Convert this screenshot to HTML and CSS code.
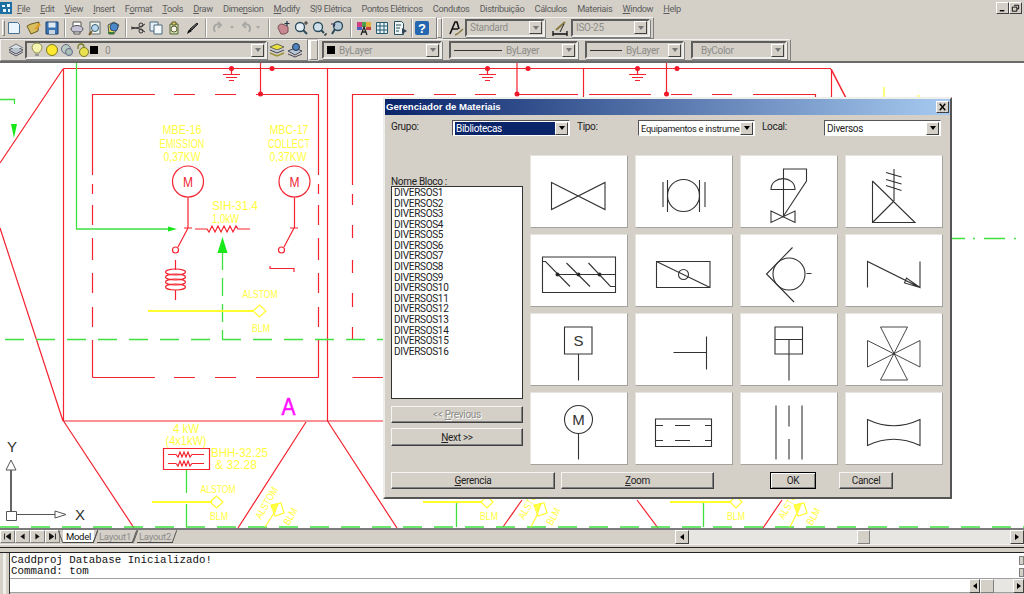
FILE: index.html
```html
<!DOCTYPE html>
<html lang="pt">
<head>
<meta charset="utf-8">
<title>Gerenciador de Materiais</title>
<link rel="stylesheet" href="styles.css">
</head>
<body>
<div class="app">
  <nav class="menubar">
    <svg class="app-icon" viewBox="0 0 12 12"><rect width="12" height="12" fill="#1c6ea4"/><path d="M2 3h3v2H2zM7 2h3v3H7zM3 7h3v3H3zM8 7h2v3H8z" fill="#e8f4ff"/></svg>
    <span class="menu"><u>F</u>ile</span><span class="menu"><u>E</u>dit</span><span class="menu"><u>V</u>iew</span><span class="menu"><u>I</u>nsert</span><span class="menu">F<u>o</u>rmat</span><span class="menu"><u>T</u>ools</span><span class="menu"><u>D</u>raw</span><span class="menu">Dime<u>n</u>sion</span><span class="menu"><u>M</u>odify</span><span class="menu">S|9 Elétrica</span><span class="menu">Pontos Elétricos</span><span class="menu">Condutos</span><span class="menu">Distribuição</span><span class="menu">Cálculos</span><span class="menu">Materiais</span><span class="menu"><u>W</u>indow</span><span class="menu"><u>H</u>elp</span>
    <span class="win-btns">
      <span class="win-btn"><svg viewBox="0 0 12 11"><path d="M3 8.500h5" stroke="#000" stroke-width="1.500"/></svg></span>
      <span class="win-btn"><svg viewBox="0 0 12 11"><path d="M4.500 2.500h5v4h-2M2.500 4.500h5v4.500h-5z" fill="none" stroke="#000"/></svg></span>
    </span>
  </nav>

  <div class="tb-row">
    <div class="band band-std">
      <span class="grip-one"></span>
      <span class="tb"><svg viewBox="0 0 16 16"><path d="M2.500 2.500h9l2 2v9h-11z" fill="#eaf4fb" stroke="#4a6f94"/></svg></span>
      <span class="tb tb-open"><svg viewBox="0 0 16 16"><path d="M1 6l4-2 8-2-1 9-7 3z" fill="#d8c060" stroke="#6d5a20"/><path d="M8 9l5-6 2 2-5 5z" fill="#e0a030"/></svg></span>
      <span class="tb"><svg viewBox="0 0 16 16"><path d="M2 2h12v12H2z" fill="#3b74b4" stroke="#1d3f6d"/><path d="M4.500 2.500h7v5h-7z" fill="#dfeaf4"/><path d="M5 10h6v4H5z" fill="#c8d4e0"/></svg></span>
      <span class="sep"></span>
      <span class="tb"><svg viewBox="0 0 16 16"><path d="M4 6V2h8v4" fill="#fff" stroke="#555"/><ellipse cx="8" cy="9" rx="6" ry="3.500" fill="#c6c2d8" stroke="#555"/><path d="M5 12h6v2H5z" fill="#fff" stroke="#555"/></svg></span>
      <span class="tb"><svg viewBox="0 0 16 16"><path d="M3 2h10v12H3z" fill="#f4f4ea" stroke="#5a6a70"/><circle cx="8" cy="8" r="3.500" fill="#b8d8f0" stroke="#3a6070"/><path d="M5 11l-3 4" stroke="#7a5a20" stroke-width="2"/></svg></span>
      <span class="tb"><svg viewBox="0 0 16 16"><path d="M3 5l6-3 5 3-5 9H4z" fill="#e6d858" stroke="#555"/><circle cx="9" cy="7" r="4" fill="#4d88c8" stroke="#28507a"/><path d="M3 13h6" stroke="#3a7a3a" stroke-width="2"/></svg></span>
      <span class="sep"></span>
      <span class="tb"><svg viewBox="0 0 16 16"><path d="M1 7l9 2 5 3M1 9l9-2 5-3" fill="none" stroke="#333"/><circle cx="11" cy="5" r="2" fill="none" stroke="#333"/><circle cx="11" cy="11" r="2" fill="none" stroke="#333"/></svg></span>
      <span class="tb"><svg viewBox="0 0 16 16"><path d="M2 2h8v9H2z" fill="#e8f0f6" stroke="#4a6880"/><path d="M6 5h8v9H6z" fill="#f6fafc" stroke="#4a6880"/></svg></span>
      <span class="tb"><svg viewBox="0 0 16 16"><path d="M4 4h8v10H4z" fill="#cfe0b8" stroke="#56602e"/><path d="M6 2h4v3H6z" fill="#e0c060" stroke="#56602e"/><circle cx="8" cy="9" r="3" fill="#f4f4e8" stroke="#56602e"/></svg></span>
      <span class="tb"><svg viewBox="0 0 16 16"><path d="M13 3l1 1-6 6-2-1z" fill="#555" stroke="#222"/><path d="M6 9l2 2-5 3 1-3z" fill="#111"/></svg></span>
      <span class="sep sep-wide"></span>
      <span class="tb"><svg viewBox="0 0 16 16"><path d="M4 12c-3-6 1-9 6-7M7 2l3 3-3 3" fill="none" stroke="#a8a8a4" stroke-width="2"/></svg></span>
      <span class="tb-drop"><i></i></span>
      <span class="tb"><svg viewBox="0 0 16 16"><path d="M12 12c3-6-1-9-6-7M9 2L6 5l3 3" fill="none" stroke="#a8a8a4" stroke-width="2"/></svg></span>
      <span class="tb-drop"><i></i></span>
      <span class="sep sep-wider"></span>
      <span class="tb"><svg viewBox="0 0 16 16"><path d="M3 8c0-3 2-4 4-4l3 1 3 2v5l-3 2H6z" fill="#c88a90" stroke="#7a5058"/><path d="M12 1v5M9.500 3.500h5" stroke="#234" stroke-width="1.200"/></svg></span>
      <span class="tb"><svg viewBox="0 0 16 16"><circle cx="7" cy="7" r="4.500" fill="#e4eef4" stroke="#2a4a5a" stroke-width="1.300"/><path d="M10 10l4 4" stroke="#2a4a5a" stroke-width="2"/><path d="M13 1v4M11 3h4" stroke="#333"/></svg></span>
      <span class="tb"><svg viewBox="0 0 16 16"><circle cx="7" cy="7" r="4.500" fill="#cfe0ec" stroke="#2a4a5a" stroke-width="1.300"/><path d="M10 10l3 3" stroke="#2a4a5a" stroke-width="2"/><path d="M15 13v2h-2" stroke="#111" fill="none"/></svg></span>
      <span class="tb"><svg viewBox="0 0 16 16"><circle cx="9" cy="6" r="4.500" fill="#b4c8d8" stroke="#2a4a5a" stroke-width="1.300"/><path d="M6 9l-3 5" stroke="#2a4a5a" stroke-width="2"/><path d="M2 4h4l-1 3" fill="none" stroke="#335"/></svg></span>
      <span class="sep sep-wide"></span>
      <span class="tb"><svg viewBox="0 0 16 16"><path d="M1 2h5v5H1z" fill="#d04080"/><path d="M6 2h4v5H6z" fill="#50a050"/><path d="M10 2h5v5h-5z" fill="#e0b040"/><path d="M1 7h5v3H1z" fill="#5060c0"/><path d="M10 7h5v3h-5z" fill="#c04040"/><path d="M5 15l3-8 3 8M6 12h4" fill="none" stroke="#222" stroke-width="1.300"/></svg></span>
      <span class="tb"><svg viewBox="0 0 16 16"><path d="M2.500 2.500h11v11h-11z" fill="#e8f4fa" stroke="#26586e"/><path d="M2.500 6h11M2.500 10h11M6 2.500v11M10 2.500v11" stroke="#26586e"/></svg></span>
      <span class="tb"><svg viewBox="0 0 16 16"><path d="M2.500 1.500h7l2 2v11h-9z" fill="#f0f4f4" stroke="#27505e"/><path d="M4 5h5M4 8h4M4 11h3" stroke="#27505e"/><path d="M10 8l5 3-5 3z" fill="#345"/></svg></span>
      <span class="sep sep-narrow"></span>
      <span class="tb"><svg viewBox="0 0 16 16"><rect x="1" y="1" width="14" height="14" rx="2" fill="#2566b0"/><text class="help-mark" x="8" y="12.500">?</text></svg></span>
    </div>
    <span class="grip"></span>
    <div class="band band-style">
      <span class="tb tb-a"><svg viewBox="0 0 16 16"><path d="M2 14L7 2h2l2 7M4 9h6" fill="none" stroke="#111" stroke-width="1.600"/><path d="M7 15c3-1 5-3 8-6" stroke="#8a7a40" stroke-width="1.500" fill="none"/></svg></span>
      <span class="combo combo-standard"><span class="combo-text">Standard</span><span class="arrow"><i></i></span></span>
      <span class="tb tb-dim"><svg viewBox="0 0 16 16"><path d="M1 14h14M1 11v5M15 11v5" stroke="#111" fill="none" stroke-width="1.300"/><path d="M4 10l9-8" stroke="#8a7a40" stroke-width="2"/><path d="M8 12l4-8" stroke="#222"/></svg></span>
      <span class="combo combo-iso"><span class="combo-text">ISO-25</span><span class="arrow"><i></i></span></span>
    </div>
  </div>

  <div class="tb-row tb-row-last">
    <div class="band band-layers">
      <span class="tb tb-first"><svg viewBox="0 0 16 16"><path d="M8 4l7 4-7 4-7-4z" fill="#b8c4cc" stroke="#556"/><path d="M1 10l7 4 7-4" fill="none" stroke="#556"/><path d="M1 6l7-4 7 4" fill="#d8e0e4" stroke="#778"/></svg></span>
      <span class="combo combo-layer">
        <span class="layer-icons">
          <svg viewBox="0 0 14 16"><path d="M7 1c3 0 5 2 5 4.500S10 9 9 11H5C4 9 2 8 2 5.500S4 1 7 1z" fill="#f4f4b0" stroke="#8a8a50"/><path d="M5 12h4v2H5z" fill="#999"/></svg>
          <svg viewBox="0 0 14 16"><circle cx="7" cy="8" r="5.500" fill="#ffe830" stroke="#7a7a20"/></svg>
          <svg viewBox="0 0 14 16"><circle cx="6" cy="7" r="4.500" fill="#b8ccc4" stroke="#668"/><circle cx="9" cy="10" r="3.500" fill="#a8c0b8" stroke="#668"/></svg>
          <svg viewBox="0 0 14 16"><path d="M3 7V5c0-4 6-4 6 0" fill="none" stroke="#7a7a20" stroke-width="1.300"/><circle cx="9" cy="10" r="4.500" fill="#e8e050" stroke="#7a7a20"/></svg>
          <span class="swatch"></span>
        </span>
        <span class="combo-text">0</span>
        <span class="arrow"><i></i></span>
      </span>
      <span class="tb tb-layer2"><svg viewBox="0 0 16 16"><path d="M1 5l7-3 7 3-7 3z" fill="#e6e040" stroke="#665"/><path d="M1 8l7 3 7-3" fill="#c0c8d0" stroke="#445"/><path d="M1 11l7 3 7-3" fill="none" stroke="#9a9030" stroke-width="1.500"/></svg></span>
      <span class="tb"><svg viewBox="0 0 16 16"><path d="M1 9l7-3 7 3-7 4z" fill="#b8c8d8" stroke="#445"/><circle cx="9" cy="5" r="3.500" fill="#5080c0" stroke="#234"/><path d="M1 12l7 3 7-3" fill="none" stroke="#445"/></svg></span>
    </div>
    <span class="grip grip-props"></span>
    <div class="band band-props">
      <span class="combo combo-color"><span class="swatch"></span><span class="combo-text">ByLayer</span><span class="arrow"><i></i></span></span>
      <span class="combo combo-ltype"><span class="line-sample"></span><span class="combo-text">ByLayer</span><span class="arrow"><i></i></span></span>
      <span class="combo combo-lweight"><span class="line-sample"></span><span class="combo-text">ByLayer</span><span class="arrow"><i></i></span></span>
      <span class="combo combo-plot"><span class="combo-text combo-indent">ByColor</span><span class="arrow"><i></i></span></span>
    </div>
  </div>

  <main class="canvas">
    <svg class="drawing" viewBox="0 63 1024 465">
      <g class="red">
        <path d="M63.500 68.500H831M63.500 68.500V421M63.500 421H384M0 163L63 69M0 228L63 421M327.500 69V421"/>
        <path d="M63.500 421L134 528M306 422L238 528M327.500 421L397 528"/>
        <path d="M522 500L503 527M637 500L658 528M782 500L763 528"/>
        <path d="M92.500 94.500H155M174 94.500H195M215 94.500H236M256 94.500H318.500M92.500 94V175M92.500 184V194M92.500 205V225M92.500 238V260M92.500 273V293M92.500 307V327M92.500 340V377.500M92.500 377.500H155M174 377.500H195M215 377.500H236M256 377.500H318.500"/>
        <path d="M318.500 94V175M318.500 184V194M318.500 205V225M318.500 238V260M318.500 273V293M318.500 307V327M318.500 340V377.500"/>
        <path d="M352.500 94.500H384M352.500 94V185M352.500 194V205M352.500 225V238M352.500 260V273M352.500 293V307M352.500 327V340M352.500 377.500H384"/>
        <path d="M384 94.500H414M434 94.500H456M475 94.500H496M519 94.500H578M589 94.500H651M671 94.500H692M712 94.500H732M753 94.500H815M815.500 94V98"/>
        <path d="M260.500 63V94M517 63V94M583.500 69V98M666.500 63V94M831.500 69V98"/>
        <path class="heavy" d="M831 69L846 98"/>
        <path d="M223 74.500H240M226 77.500H237M229 80.500H234M231.500 69V74M479 74.500H496M482 77.500H493M485 80.500H490M487.500 69V74M629 74.500H646M632 77.500H643M635 80.500H640M637.500 69V74"/>
        <circle cx="188" cy="181.500" r="15.500"/><circle cx="294.500" cy="181.500" r="15.500"/>
        <path d="M188 197V228M294.500 197V228M184 228H192M290 228H298M188 228L178 247M294 228L284 247"/>
        <circle cx="175.500" cy="250" r="3"/><circle cx="281.500" cy="250" r="3"/>
        <path d="M195 229H207L209 232L212 226L215 232L218 226L221 232L224 226L227 232L230 226L233 232L236 226L238 229H250"/>
        <path d="M175.500 260V270M175.500 290V300"/>
        <ellipse cx="175.500" cy="272" rx="10" ry="3"/><ellipse cx="175.500" cy="277" rx="10" ry="3"/><ellipse cx="175.500" cy="282" rx="10" ry="3"/><ellipse cx="175.500" cy="287" rx="10" ry="3"/>
        <path d="M270 266V268.500H294V272"/>
        <path d="M163.500 448.500H209.500V469.500H163.500Z"/>
        <path d="M168 454.500H176L178 457L180 452L182 457L184 452L186 457L188 452L190 457L192 454.500H204M168 463.500H176L178 466L180 461L182 466L184 461L186 466L188 461L190 466L192 463.500H204"/>
      </g>
      <g class="red-fill">
        <circle cx="231.500" cy="68.500" r="2.500"/><circle cx="272" cy="68.500" r="2.500"/><circle cx="260.500" cy="94" r="2.500"/>
        <circle cx="487.500" cy="68.500" r="2.500"/><circle cx="528" cy="68.500" r="2.500"/><circle cx="517" cy="94" r="2.500"/>
        <circle cx="637.500" cy="68.500" r="2.500"/><circle cx="677" cy="68.500" r="2.500"/><circle cx="666.500" cy="94" r="2.500"/>
      </g>
      <g class="green">
        <path d="M76.500 63V229H168M0 99.500H14.500V104"/>
        <path class="dash" d="M5 339.500H384"/>
        <path class="dash" d="M0 527H1024"/>
        <path class="dash-short" d="M222.500 252V339"/>
        <path d="M186.500 470V493M186.500 504V527M456.500 502V527M703.500 502V527"/>
        <path d="M952 238.500H965M973 238.500H975M984 238.500H1005M1014 238.500H1016"/>
      </g>
      <g class="green-fill">
        <path d="M168 226.500L177 229L168 231.500Z"/>
        <path d="M222.500 237L227.500 253H217.500Z"/>
        <path d="M11 124H17L14 138Z"/>
      </g>
      <g class="yellow-line">
        <path class="thick" d="M148 311H253M152 502H212M423 502H482M670 502H731"/>
        <path d="M253 311L259.500 305L266 311L259.500 317Z"/>
        <path d="M210 502L216.500 496L223 502L216.500 508Z"/>
        <path d="M481 502L487 496L493 502L487 508Z"/>
        <path d="M730 502L736 496L742 502L736 508Z"/>
        <path d="M265 527L274 513M531 527L538 513M790 527L797 513"/>
        <path d="M271 505L281 503L284 513L275 516Z"/>
        <path d="M534 505L544 503L547 513L538 516Z"/>
        <path d="M794 505L804 503L807 513L798 516Z"/>
        <path class="kite" d="M272 505L278 504L275 512Z"/>
        <path class="kite" d="M535 505L541 504L538 512Z"/>
        <path class="kite" d="M795 505L801 504L798 512Z"/>
        <path d="M884 87V97M917 96H920"/>
      </g>
      <g class="cad">
        <text x="182" y="134" textLength="39" lengthAdjust="spacingAndGlyphs">MBE-16</text>
        <text x="182" y="148" textLength="45" lengthAdjust="spacingAndGlyphs">EMISSION</text>
        <text x="182" y="161" textLength="37" lengthAdjust="spacingAndGlyphs">0,37KW</text>
        <text x="289" y="134" textLength="39" lengthAdjust="spacingAndGlyphs">MBC-17</text>
        <text x="289" y="148" textLength="42" lengthAdjust="spacingAndGlyphs">COLLECT</text>
        <text x="288" y="161" textLength="37" lengthAdjust="spacingAndGlyphs">0,37KW</text>
        <text class="start" x="212" y="210" textLength="46" lengthAdjust="spacingAndGlyphs">SIH-31.4</text>
        <text class="start" x="212" y="223" textLength="27" lengthAdjust="spacingAndGlyphs">1,0kW</text>
        <text class="small" x="260" y="298" textLength="35" lengthAdjust="spacingAndGlyphs">ALSTOM</text>
        <text class="small" x="261" y="332" textLength="18" lengthAdjust="spacingAndGlyphs">BLM</text>
        <text x="186" y="433" textLength="26" lengthAdjust="spacingAndGlyphs">4 kW</text>
        <text x="186" y="445" textLength="41" lengthAdjust="spacingAndGlyphs">(4x1kW)</text>
        <text class="start" x="211" y="457" textLength="57" lengthAdjust="spacingAndGlyphs">BHH-32.25</text>
        <text class="start" x="215" y="469" textLength="42" lengthAdjust="spacingAndGlyphs">&amp; 32.28</text>
        <text class="small" x="218" y="493" textLength="35" lengthAdjust="spacingAndGlyphs">ALSTOM</text>
        <text class="small" x="219" y="520" textLength="18" lengthAdjust="spacingAndGlyphs">BLM</text>
        <text class="small" x="489" y="520" textLength="18" lengthAdjust="spacingAndGlyphs">BLM</text>
        <text class="small" x="736" y="520" textLength="18" lengthAdjust="spacingAndGlyphs">BLM</text>
        <text class="small start" transform="translate(261 520) rotate(-60)" textLength="35" lengthAdjust="spacingAndGlyphs">ALSTOM</text>
        <text class="small start" transform="translate(289 526) rotate(-60)" textLength="18" lengthAdjust="spacingAndGlyphs">BLM</text>
        <text class="small start" transform="translate(524 520) rotate(-60)" textLength="35" lengthAdjust="spacingAndGlyphs">ALSTOM</text>
        <text class="small start" transform="translate(552 526) rotate(-60)" textLength="18" lengthAdjust="spacingAndGlyphs">BLM</text>
        <text class="small start" transform="translate(784 520) rotate(-60)" textLength="35" lengthAdjust="spacingAndGlyphs">ALSTOM</text>
        <text class="small start" transform="translate(812 526) rotate(-60)" textLength="18" lengthAdjust="spacingAndGlyphs">BLM</text>
      </g>
      <text class="red-m" x="188" y="187" textLength="10" lengthAdjust="spacingAndGlyphs">M</text>
      <text class="red-m" x="294.500" y="187" textLength="10" lengthAdjust="spacingAndGlyphs">M</text>
      <text class="mark-a" x="288.500" y="415" textLength="14" lengthAdjust="spacingAndGlyphs">A</text>
      <g class="ucs">
        <path class="ucs-thick" d="M11 470V511"/>
        <path d="M11 460L16 470H6ZM6.500 511.500H16.500V520.500H6.500ZM16.500 514.500H55M55 511L66 514.500L55 518Z"/>
        <text x="12" y="452">Y</text>
        <text x="80" y="520">X</text>
      </g>
    </svg>
  </main>

  <div class="tabbar">
    <div class="tab-nav">
      <span class="nav-btn"><svg viewBox="0 0 15 13"><path d="M4 3v7M11 3L6 6.500 11 10z" fill="#111" stroke="#111"/></svg></span>
      <span class="nav-btn"><svg viewBox="0 0 15 13"><path d="M10 3L5 6.500 10 10z" fill="#111"/></svg></span>
      <span class="nav-btn"><svg viewBox="0 0 15 13"><path d="M5 3l5 3.500L5 10z" fill="#111"/></svg></span>
      <span class="nav-btn"><svg viewBox="0 0 15 13"><path d="M11 3v7M4 3l5 3.500L4 10z" fill="#111" stroke="#111"/></svg></span>
    </div>
    <span class="tab tab-active">Model</span>
    <span class="tab">Layout1</span>
    <span class="tab">Layout2</span>
    <div class="hscroll">
      <span class="scroll-btn"><i class="tri-left"></i></span>
      <span class="scroll-track"><span class="thumb"></span></span>
      <span class="scroll-btn"><i class="tri-right"></i></span>
    </div>
  </div>

  <section class="cmd">
    <div class="cmd-rule"></div>
    <div class="cmd-body">
      <span class="cmd-grip"></span>
      <div class="cmd-main">
        <div class="cmd-history">
          <pre class="cmd-text">Caddproj Database Inicializado!
Command: tom</pre>
          <div class="cmd-vscroll"><span></span><span></span></div>
        </div>
        <div class="cmd-input">
          <div class="cmd-hscroll">
            <span class="scroll-btn small"><i class="tri-left"></i></span>
            <span class="thumb mini"></span>
            <span class="cmd-track"></span>
            <span class="scroll-btn small"><i class="tri-right"></i></span>
          </div>
        </div>
      </div>
    </div>
  </section>

  <div class="dialog">
    <header class="dlg-title">
      <span>Gerenciador de Materiais</span>
      <span class="dlg-close"><svg viewBox="0 0 12 11"><path d="M3 2l6 7M9 2L3 9" stroke="#000" stroke-width="1.500"/></svg></span>
    </header>
    <div class="dlg-form">
      <label class="dlg-label">Grupo:</label>
      <span class="field field-a selected"><span class="field-text">Bibliotecas</span><span class="arrow"><i></i></span></span>
      <label class="dlg-label after">Tipo:</label>
      <span class="field field-tipo"><span class="field-text">Equipamentos e instrumer</span><span class="arrow"><i></i></span></span>
      <label class="dlg-label after wide">Local:</label>
      <span class="field"><span class="field-text">Diversos</span><span class="arrow"><i></i></span></span>
    </div>
    <div class="dlg-body">
      <div class="dlg-left">
        <div class="list-label">Nome Bloco :</div>
        <ul class="block-list">
          <li>DIVERSOS1</li><li>DIVERSOS2</li><li>DIVERSOS3</li><li>DIVERSOS4</li><li>DIVERSOS5</li><li>DIVERSOS6</li><li>DIVERSOS7</li><li>DIVERSOS8</li><li>DIVERSOS9</li><li>DIVERSOS10</li><li>DIVERSOS11</li><li>DIVERSOS12</li><li>DIVERSOS13</li><li>DIVERSOS14</li><li>DIVERSOS15</li><li>DIVERSOS16</li>
        </ul>
        <button class="btn btn-disabled">&lt;&lt; <u>P</u>revious</button>
        <button class="btn btn-next"><u>N</u>ext &gt;&gt;</button>
      </div>
      <div class="symbols">
        <div class="cell"><svg viewBox="0 0 98 73"><path d="M21.500 27.500L75 54.500V27.500L21.500 54.500Z"/></svg></div>
        <div class="cell"><svg viewBox="0 0 98 73"><circle cx="48.500" cy="40.500" r="16"/><path d="M28 27V52M32.500 25V57M64.500 25V57M70 27V52"/></svg></div>
        <div class="cell"><svg viewBox="0 0 98 73"><path d="M43.500 61V14H66.500V26L43.500 61M31 56L55 67.500V56L31 67.500Z"/><path d="M31 34.500H55C55 20 31 20 31 34.500Z"/></svg></div>
        <div class="cell"><svg viewBox="0 0 98 73"><path d="M49 14V46M41 17.500L56.500 22M41 24.500L56.500 29M41 30.500L56.500 35.500M27.500 26V67.500H70L27.500 26M49 46L27.500 67.500"/></svg></div>
        <div class="cell"><svg viewBox="0 0 98 73"><path d="M12.500 23H85.500V58.500H12.500ZM27.500 40.500H85.500M12.500 27.500H15.500L40 52.500M36.500 29L60 52.500M58.500 29L80.500 52.500H85.500"/><circle class="dot" cx="27.500" cy="40.500" r="1.500"/><circle class="dot" cx="48.500" cy="40.500" r="1.500"/><circle class="dot" cx="69.500" cy="40.500" r="1.500"/></svg></div>
        <div class="cell"><svg viewBox="0 0 98 73"><path d="M21.500 27.500H75V53.500H21.500ZM21.500 27.500L75 53.500"/><circle cx="48.500" cy="40.500" r="5"/></svg></div>
        <div class="cell"><svg viewBox="0 0 98 73"><circle cx="49" cy="40" r="16"/><path d="M52.500 13.500L26.500 40L54 68M66.500 39.500H71.500"/></svg></div>
        <div class="cell"><svg viewBox="0 0 98 73"><path d="M22.500 53.500V27.500L75 53.500V27.500M75 53.500L59.500 49L61.500 44Z"/></svg></div>
        <div class="cell"><svg viewBox="0 0 98 73"><path d="M34.500 14H62V41H34.500ZM48.500 41V67.500"/><text x="48.500" y="33">S</text></svg></div>
        <div class="cell"><svg viewBox="0 0 98 73"><path d="M38.500 39.500H71.500M71.500 23.500V56.500"/></svg></div>
        <div class="cell"><svg viewBox="0 0 98 73"><path d="M35 14H62.500V41H35ZM35 26.500H62.500M49 26.500V67.500"/></svg></div>
        <div class="cell"><svg viewBox="0 0 98 73"><path class="thin" d="M35.500 14H62.500L35.500 67H62.500ZM22.500 27.500V54L75 27.500V54Z"/></svg></div>
        <div class="cell"><svg viewBox="0 0 98 73"><circle cx="48.500" cy="27.500" r="14"/><path d="M48.500 41.500V67.500"/><text x="48.500" y="32.500">M</text></svg></div>
        <div class="cell"><svg viewBox="0 0 98 73"><path d="M20.500 27H76.500V54.500H20.500ZM20.500 33.500H28M40 33.500H55M70 33.500H76.500M20.500 48.500H28M40 48.500H55M70 48.500H76.500"/></svg></div>
        <div class="cell"><svg viewBox="0 0 98 73"><path d="M36 13.500V67.500M62 13.500V67.500M49 13.500V34.500M49 47V67.500"/></svg></div>
        <div class="cell"><svg viewBox="0 0 98 73"><path d="M22.500 27.500V53.500Q48.500 41 75 53.500V27.500Q48.500 40 22.500 27.500Z"/></svg></div>
      </div>
    </div>
    <div class="dlg-footer">
      <button class="btn btn-gerencia"><u>G</u>erencia</button>
      <button class="btn btn-zoom"><u>Z</u>oom</button>
      <button class="btn btn-ok">OK</button>
      <button class="btn btn-cancel">Cancel</button>
    </div>
  </div>
</div>
</body>
</html>
```

FILE: styles.css
```css
* { box-sizing: border-box; }
html, body { margin: 0; padding: 0; background: #d4d0c8; }
body { font-family: Roboto, "Liberation Sans", Arial, sans-serif; }
.app {
  position: relative;
  width: 1024px;
  height: 594px;
  overflow: hidden;
  display: flex;
  flex-direction: column;
  background: #d4d0c8;
}

/* menu */
.menubar {
  height: 16px;
  flex: none;
  display: flex;
  align-items: center;
  font-size: 9.200px;
  letter-spacing: -.35px;
  color: #5c5c5c;
}
.app-icon { width: 12px; height: 12px; margin: 0 5px 0 0; flex: none; }
.menu { margin-right: 10.200px; white-space: nowrap; }
.win-btns { margin-left: auto; display: flex; margin-right: 2px; }
.win-btn {
  width: 13px;
  height: 12px;
  background: #d4d0c8;
  border: 1px solid;
  border-color: #fff #404040 #404040 #fff;
  display: flex;
}
.win-btn svg { width: 100%; height: 100%; }

/* toolbars */
.tb-row { height: 23px; flex: none; display: flex; align-items: center; }
.tb-row-last { height: 24px; border-bottom: 2px solid #6a6a6a; }
.band {
  height: 22px;
  display: flex;
  align-items: center;
  border: 1px solid;
  border-color: #f4f2ee #808080 #808080 #f4f2ee;
}
.band-std { width: 437px; padding-left: 2px; border-left-width: 0; }
.grip-one { width: 3px; height: 16px; margin-right: 0; border: 1px solid; border-color: #fff #808080 #808080 #fff; }
.band-style { width: 212px; padding-left: 2px; }
.band-layers { width: 308px; }
.band-props { width: 473px; padding-left: 3px; }
.grip {
  width: 5px;
  height: 20px;
  margin: 0 0;
  border: 1px solid;
  border-color: #fff #808080 #808080 #fff;
  flex: none;
}
.grip-props { width: 10px; border-left-width: 3px; }
.tb { width: 18px; height: 18px; flex: none; display: flex; align-items: center; justify-content: center; }
.tb svg { width: 16px; height: 16px; }
.tb-open { margin-left: 2px; }
.tb-first { margin-left: 6px; }
.tb-layer2 { margin-left: 1px; }
.tb-a { margin-left: 2px; }
.tb-dim { margin: 0 2px 0 6px; }
.tb-drop { width: 8px; height: 18px; display: flex; align-items: center; justify-content: center; }
.tb-drop i { border: 2px solid transparent; border-top: 3px solid #a8a8a4; border-bottom: 0; }
.sep { width: 1px; height: 18px; margin: 0 3px; background: #9a9a94; box-shadow: 1px 0 #fff; flex: none; }
.sep-wide { margin: 0 4px; }
.sep-wider { margin: 0 5.500px; }
.sep-narrow { margin: 0 1.500px; }
.help-mark { font: bold 13px "Liberation Sans", sans-serif; fill: #fff; text-anchor: middle; }

.combo {
  height: 18px;
  flex: none;
  display: flex;
  align-items: center;
  padding: 0 1px 0 3px;
  border: 2px solid;
  border-color: #5e5e5e #eeeeea #eeeeea #5e5e5e;
  font-size: 10px;
  letter-spacing: -.3px;
  color: #8c8c88;
  background: #d4d0c8;
  box-shadow: 1px 1px 0 #808080;
}
.combo-standard { width: 80px; }
.combo-iso { width: 79px; }
.combo-layer { width: 242px; }
.combo-color { width: 120px; margin-right: 7px; }
.combo-ltype { width: 129px; margin-right: 7px; }
.combo-lweight { width: 99px; margin-right: 7px; }
.combo-plot { width: 96px; }
.combo-text { flex: 1; min-width: 0; white-space: nowrap; overflow: hidden; }
.combo-indent { padding-left: 5px; }
.arrow {
  width: 13px;
  height: 13px;
  flex: none;
  background: #d4d0c8;
  border: 1px solid;
  border-color: #fff #404040 #404040 #fff;
  display: flex;
  align-items: center;
  justify-content: center;
}
.arrow i { border: 3px solid transparent; border-top: 4px solid #000; border-bottom: 0; }
.combo .arrow i { border-top-color: #777; }
.swatch { width: 8px; height: 8px; background: #000; flex: none; margin-right: 4px; }
.layer-icons { display: flex; align-items: center; margin-right: 3px; }
.layer-icons svg { width: 14px; height: 16px; margin-right: 1px; }
.line-sample { width: 48px; height: 1px; background: #333; margin: 0 4px 0 0; flex: none; }
.combo-lweight .line-sample { width: 32px; }

/* canvas */
.canvas { height: 465px; flex: none; background: #fff; overflow: hidden; }
.drawing { display: block; width: 1024px; height: 465px; }
.red { fill: none; stroke: #f5222f; stroke-width: 1.200; }
.red .heavy { stroke-width: 1.600; }
.red-fill { fill: #f01828; }
.green { fill: none; stroke: #3fe03f; stroke-width: 1.300; }
.green .dash { stroke-dasharray: 19 12; }
.green .dash-short { stroke-dasharray: 18 8; }
.green-fill { fill: #18e818; }
.yellow-line { fill: none; stroke: #ffff30; stroke-width: 1.200; }
.yellow-line .thick { stroke-width: 2.200; }
.yellow-line .kite { fill: #ffff50; }
.cad { font: 12.500px "Liberation Sans", sans-serif; fill: #ffff40; text-anchor: middle; }
.cad .start { text-anchor: start; }
.cad .small { font-size: 10.500px; }
.red-m { font: 15px "Liberation Sans", sans-serif; fill: #f02838; text-anchor: middle; }
.mark-a { font: 23px "Liberation Sans", sans-serif; fill: #ff10ff; stroke: #ff10ff; stroke-width: .5; text-anchor: middle; }
.ucs { fill: none; stroke: #555; stroke-width: 1; }
.ucs-thick { stroke-width: 2; stroke: #666; }
.ucs text { font: 15px "Liberation Sans", sans-serif; fill: #333; stroke: none; text-anchor: middle; }

/* tab bar */
.tabbar {
  height: 17px;
  flex: none;
  display: flex;
  align-items: flex-start;
  border-top: 2px solid #7a7a7a;
  border-bottom: 1px solid #f4f2ee;
  font-size: 9.500px;
  letter-spacing: -.25px;
  color: #8c8c88;
  background: #d4d0c8;
}
.tab-nav { display: flex; width: 60px; margin-right: 3px; }
.nav-btn {
  width: 15px;
  height: 13px;
  border: 1px solid;
  border-color: #fff #808080 #808080 #fff;
  display: flex;
}
.nav-btn svg { width: 100%; height: 100%; }
.tab {
  position: relative;
  height: 13px;
  width: 36px;
  margin-right: 4px;
  line-height: 13px;
  text-align: center;
  border-bottom: 1px solid #444;
  white-space: nowrap;
}
.tab::before, .tab::after {
  content: "";
  position: absolute;
  top: 0;
  height: 13px;
  width: 1px;
  background: #555;
}
.tab::before { left: -2px; transform: rotate(20deg); }
.tab::after { right: -2px; transform: rotate(20deg); }
.tab-active { width: 31px; color: #111; background: #fff; margin-right: 3px; }
.tab-active::after { transform: rotate(20deg); }
.tab-active::before { left: -3px; transform: rotate(-20deg); }
.hscroll {
  margin-left: auto;
  width: 349px;
  height: 14px;
  display: flex;
  background: #e8e6e2;
}
.scroll-btn {
  width: 14px;
  height: 14px;
  flex: none;
  background: #d4d0c8;
  border: 1px solid;
  border-color: #fff #404040 #404040 #fff;
  display: flex;
  align-items: center;
  justify-content: center;
}
.scroll-btn.small { width: 11px; height: 14px; }
.tri-left { border: 3px solid transparent; border-right: 4px solid #000; border-left: 0; }
.tri-right { border: 3px solid transparent; border-left: 4px solid #000; border-right: 0; }
.scroll-track { flex: 1; display: flex; padding-left: 168px; }
.thumb {
  width: 13px;
  height: 14px;
  background: #d4d0c8;
  border: 1px solid;
  border-color: #fff #808080 #808080 #fff;
  flex: none;
}
.thumb.mini { width: 14px; }

/* command window */
.cmd { flex: 1; display: flex; flex-direction: column; background: #d4d0c8; }
.cmd-rule {
  height: 6px;
  margin-top: 2px;
  border-top: 1px solid #222;
  border-bottom: 1px solid #222;
  background: #d4d0c8;
  flex: none;
}
.cmd-body { flex: 1; display: flex; }
.cmd-grip {
  width: 9px;
  margin-right: 0;
  border-left: 3px solid #d4d0c8;
  border-right: 3px solid #d4d0c8;
  background: #f2f0ea;
  flex: none;
}
.cmd-main { flex: 1; display: flex; flex-direction: column; border-left: 1px solid #333; }
.cmd-history {
  height: 26px;
  background: #fff;
  display: flex;
  border-bottom: 1px solid #a0a0a0;
  flex: none;
}
.cmd-text {
  flex: 1;
  margin: 0;
  padding: 2px 0 0 1px;
  font: 10.800px/11px "Liberation Mono", "Courier New", monospace;
  color: #111;
}
.cmd-vscroll { width: 5px; display: flex; flex-direction: column; }
.cmd-vscroll span { height: 9px; background: #d4d0c8; border: 1px solid #808080; margin-top: 3px; }
.cmd-input { height: 14px; background: #fff; display: flex; justify-content: flex-end; flex: none; border-bottom: 1px solid #a0a0a0; }
.cmd-hscroll { width: 55px; display: flex; background: #e8e6e2; margin-right: 0; height: 13px; }
.cmd-track { flex: 1; }

/* dialog */
.dialog {
  position: absolute;
  left: 383px;
  top: 97px;
  width: 569px;
  height: 402px;
  background: #d4d0c8;
  border-top: 2px solid #eeeeea;
  border-left: 2px solid #eeeeea;
  border-right: 2px solid #555;
  border-bottom: 2px solid #555;
  font-size: 10px;
  letter-spacing: -.3px;
  color: #222;
}
.dlg-title {
  height: 16px;
  background: linear-gradient(90deg, #0a246a, #a6caf0);
  color: #fff;
  font: bold 9.600px/16px "Liberation Sans", sans-serif;
  letter-spacing: 0;
  padding-left: 1px;
  display: flex;
  align-items: center;
  justify-content: space-between;
}
.dlg-close {
  width: 13px;
  height: 12px;
  margin-right: 1px;
  background: #d4d0c8;
  border: 1px solid;
  border-color: #fff #404040 #404040 #fff;
  display: flex;
}
.dlg-close svg { width: 100%; height: 100%; }
.dlg-form { display: flex; align-items: center; height: 16px; margin-top: 5px; padding-left: 6px; }
.dlg-label { width: 61px; padding-bottom: 3px; flex: none; }
.dlg-label.after { margin-left: 7px; }
.dlg-label.wide { width: 62px; }
.field {
  width: 117px;
  height: 16px;
  flex: none;
  display: flex;
  align-items: center;
  background: #fff;
  border: 1px solid;
  border-color: #555 #fff #fff #555;
  padding: 0 1px 0 2px;
}
.field-a { width: 118px; }
.field-tipo { font-size: 9.300px; letter-spacing: -.32px; }
.field-text { flex: 1; min-width: 0; overflow: hidden; white-space: nowrap; }
.selected .field-text { background: #0a246a; color: #fff; padding-left: 1px; height: 13px; line-height: 13px; }
.dlg-body { display: flex; margin-top: 19px; padding-left: 6px; height: 310px; }
.dlg-left { width: 132px; margin-right: 7px; display: flex; flex-direction: column; flex: none; }
.list-label { height: 9px; margin-top: 22px; line-height: 10px; }
.block-list {
  list-style: none;
  margin: 0;
  padding: 1px 2px 0;
  height: 213px;
  background: #fff;
  border: 1px solid #333;
  line-height: 10.580px;
  color: #222;
  flex: none;
}
.btn {
  display: block;
  height: 17px;
  padding: 0;
  background: #d4d0c8;
  border: 1px solid;
  border-color: #f6f4f0 #404040 #404040 #f6f4f0;
  box-shadow: inset -1px -1px 0 #808080;
  font: inherit;
  letter-spacing: inherit;
  color: #222;
  flex: none;
}
.dlg-left .btn { width: 132px; }
.btn-disabled { margin-top: 7px; color: #8c8c88; text-shadow: 1px 1px 0 #fff; }
.btn-next { margin-top: 5px; height: 18px; }
.symbols {
  display: grid;
  grid-template-columns: repeat(4, 98px);
  grid-template-rows: repeat(4, 73px);
  gap: 6px 7px;
}
.cell { background: #fff; border: 1px solid; border-color: #e6e4de #a4a29c #a4a29c #e6e4de; overflow: hidden; }
.cell svg { display: block; width: 98px; height: 73px; margin: -1px; fill: none; stroke: #333; stroke-width: 1.100; }
.cell .thin { stroke-width: .9; }
.cell .dot { fill: #111; }
.cell text { font: 15px "Liberation Sans", sans-serif; letter-spacing: 0; fill: #333; stroke: none; text-anchor: middle; }
.dlg-footer { display: flex; margin-top: 7px; padding-left: 6px; }
.btn-gerencia { width: 164px; margin-right: 6px; }
.btn-zoom { width: 153px; margin-right: 56px; }
.btn-ok { width: 46px; margin-right: 23px; border-color: #000; box-shadow: inset 1px 1px 0 #fff, inset -1px -1px 0 #808080; }
.btn-cancel { width: 54px; }
```
